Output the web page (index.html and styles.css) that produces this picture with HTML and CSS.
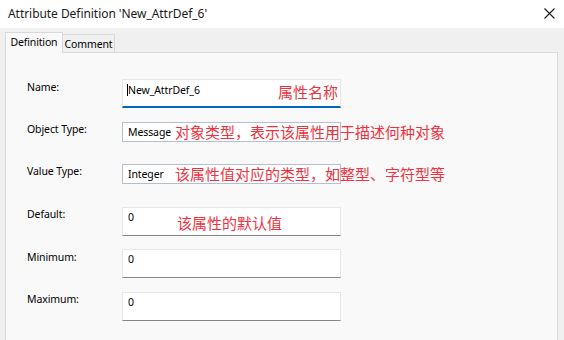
FILE: index.html
```html
<!DOCTYPE html>
<html>
<head>
<meta charset="utf-8">
<link rel="stylesheet" href="styles.css">
</head>
<body>
<div class="window">
  <div class="titlebar">
    <span class="title">Attribute Definition 'New_AttrDef_6'</span>
    <span class="close">
      <svg width="11" height="11" viewBox="0 0 11 11"><path d="M0.5 0.5 L10.5 10.5 M10.5 0.5 L0.5 10.5" stroke="#1a1a1a" stroke-width="1.1" fill="none"/></svg>
    </span>
  </div>
  <div class="client">
    <div class="tabs">
      <div class="tab active">Definition</div>
      <div class="tab">Comment</div>
    </div>
    <div class="panel">
      <div class="row r-name">
        <label class="lbl">Name:</label>
        <div class="field edit focused"><span class="caret"></span>New_AttrDef_6
          <span class="note n-name">属性名称</span>
        </div>
      </div>
      <div class="row r-obj">
        <label class="lbl">Object Type:</label>
        <div class="field combo">Message
          <span class="arrow"></span>
          <span class="note n-obj">对象类型，表示该属性用于描述何种对象</span>
        </div>
      </div>
      <div class="row r-val">
        <label class="lbl">Value Type:</label>
        <div class="field combo">Integer
          <span class="arrow"></span>
          <span class="note n-val">该属性值对应的类型，如整型、字符型等</span>
        </div>
      </div>
      <div class="row r-def">
        <label class="lbl">Default:</label>
        <div class="field edit">0
          <span class="note n-def">该属性的默认值</span>
        </div>
      </div>
      <div class="row r-min">
        <label class="lbl">Minimum:</label>
        <div class="field edit">0</div>
      </div>
      <div class="row r-max">
        <label class="lbl">Maximum:</label>
        <div class="field edit">0</div>
      </div>
    </div>
  </div>
</div>
</body>
</html>
```
FILE: styles.css
```css
* { box-sizing: border-box; }
html, body { margin: 0; padding: 0; }
body {
  width: 564px;
  height: 340px;
  overflow: hidden;
  font-family: "Noto Sans", "Liberation Sans", sans-serif;
  font-size: 12px;
  color: #000;
  background: #f0f0f0;
}
.window { width: 564px; height: 340px; display: flex; flex-direction: column; }
.titlebar {
  height: 28px;
  background: #ffffff;
  display: flex;
  align-items: center;
  justify-content: space-between;
  padding: 0 9px 2px 8px;
  flex: none;
}
.title { font-size: 12px; color: #1a1a1a; letter-spacing: -0.05px; }
.close { display: flex; width: 11px; height: 11px; margin-top: 1px; }
.client {
  flex: 1;
  background: #f0f0f0;
  padding: 4px 6px 0 5px;
  display: flex;
  flex-direction: column;
}
.tabs { display: flex; align-items: flex-end; height: 20px; flex: none; }
.tab {
  height: 18px;
  width: 52px;
  justify-content: center;
  border: 1px solid #d9d9d9;
  border-bottom: none;
  background: #f0f0f0;
  display: flex;
  align-items: center;
  font-size: 10.5px;
  letter-spacing: -0.15px;
}
.tab.active {
  width: 58px;
  height: 21px;
  margin-bottom: -1px;
  background: #f9f9f9;
  padding-bottom: 2px;
  position: relative;
  z-index: 1;
}
.tab + .tab { border-left: none; }
.panel {
  flex: 1;
  background: #f9f9f9;
  border: 1px solid #dadada;
  border-bottom: none;
  padding: 26px 0 0 21px;
}
.row { display: flex; align-items: flex-start; }
.lbl { width: 95px; flex: none; font-size: 10.5px; letter-spacing: -0.1px; line-height: 14px; }
.field {
  position: relative;
  width: 219px;
  background: #ffffff;
  font-size: 10.5px;
  letter-spacing: -0.1px;
  padding-left: 5px;
}
.edit {
  height: 29px;
  border: 1px solid #e6e6e6;
  border-bottom: 1px solid #858585;
  line-height: 16px;
  padding-top: 1px;
}
.edit.focused { border-bottom: 2px solid #0067c0; padding-top: 2px; padding-left: 4px; }
.caret { display: inline-block; width: 1px; height: 12px; background: #000; vertical-align: -2px; }
.combo {
  height: 20px;
  border: 1px solid #b4c0cc;
  line-height: 18px;
}
.arrow {
  position: absolute;
  right: 6px;
  top: 6px;
  width: 4px;
  height: 4px;
  border-right: 1px solid #808080;
  border-bottom: 1px solid #808080;
  transform: rotate(45deg);
}
.note {
  position: absolute;
  font-family: "Noto Sans CJK SC", sans-serif;
  font-size: 15px;
  line-height: 20px;
  color: #f0323e;
  letter-spacing: 0;
  white-space: nowrap;
  z-index: 2;
}
.n-name { left: 155px; top: 2px; }
.n-obj { left: 52px; top: -1px; }
.n-val { left: 52px; top: -1px; }
.n-def { left: 54px; top: 5px; }
.r-name .lbl { padding-top: 1px; }
.r-obj { margin-top: 14px; }
.r-val { margin-top: 22px; }
.r-def { margin-top: 23px; }
.r-min { margin-top: 13px; }
.r-min .lbl { padding-top: 1px; }
.r-max { margin-top: 14px; }
```
